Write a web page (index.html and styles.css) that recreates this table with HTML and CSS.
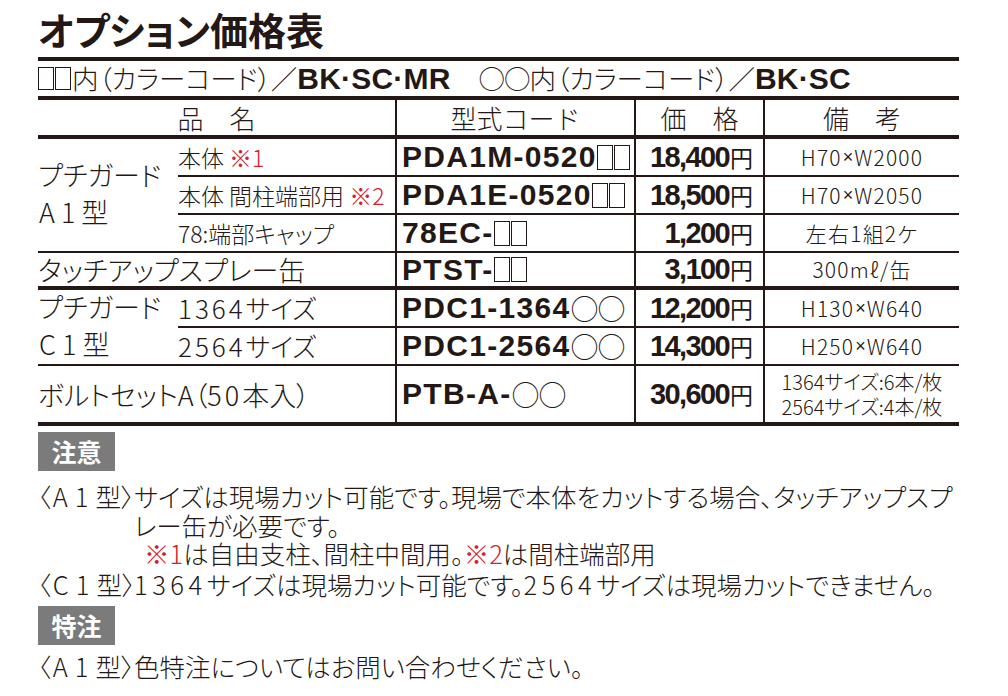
FILE: index.html
```html
<!DOCTYPE html>
<html lang="ja">
<head>
<meta charset="utf-8">
<title>オプション価格表</title>
<link rel="stylesheet" href="styles.css">
</head>
<body>
<div class="page">
  <h1 class="title">オプション価格表</h1>
  <div class="table">
    <div class="cell colorrow thick"><span class="sq"></span><span class="sq"></span>内（カラーコード）／<b class="en">BK·SC·MR</b><span class="gap"></span><span class="circ">○○</span>内（カラーコード）／<b class="en">BK·SC</b></div>

    <div class="cell hd span2 thick">品　名</div>
    <div class="cell hd vl thick">型式コード</div>
    <div class="cell hd vl thick">価　格</div>
    <div class="cell hd vl thick">備　考</div>

    <div class="cell grp rows3"><span>プチガード<br><span class="al">A1</span>型</span></div>
    <div class="cell sub small">本体&nbsp;<span class="red">※1</span></div>
    <div class="cell code vl">PDA1M-0520<span class="sq"></span><span class="sq"></span></div>
    <div class="cell price vl">18,400<span class="yen">円</span></div>
    <div class="cell rem vl">H70<span class="x">×</span>W2000</div>

    <div class="cell sub small">本体&nbsp;間柱端部用&nbsp;<span class="red">※2</span></div>
    <div class="cell code vl">PDA1E-0520<span class="sq"></span><span class="sq"></span></div>
    <div class="cell price vl">18,500<span class="yen">円</span></div>
    <div class="cell rem vl">H70<span class="x">×</span>W2050</div>

    <div class="cell sub small">78:端部キャップ</div>
    <div class="cell code vl">78EC-<span class="sq"></span><span class="sq"></span></div>
    <div class="cell price vl">1,200<span class="yen">円</span></div>
    <div class="cell rem vl">左右1組2ケ</div>

    <div class="cell span2 thick lbl">タッチアップスプレー缶</div>
    <div class="cell code vl thick">PTST-<span class="sq"></span><span class="sq"></span></div>
    <div class="cell price vl thick">3,100<span class="yen">円</span></div>
    <div class="cell rem vl thick">300mℓ/缶</div>

    <div class="cell grp rows2"><span>プチガード<br><span class="al">C1</span>型</span></div>
    <div class="cell sub"><span class="num">1364</span>サイズ</div>
    <div class="cell code vl">PDC1-1364<span class="circ">○○</span></div>
    <div class="cell price vl">12,200<span class="yen">円</span></div>
    <div class="cell rem vl">H130<span class="x">×</span>W640</div>

    <div class="cell sub"><span class="num">2564</span>サイズ</div>
    <div class="cell code vl">PDC1-2564<span class="circ">○○</span></div>
    <div class="cell price vl">14,300<span class="yen">円</span></div>
    <div class="cell rem vl">H250<span class="x">×</span>W640</div>

    <div class="cell span2 thick lbl">ボルトセットA（<span class="num">50</span>本入）</div>
    <div class="cell code vl thick">PTB-A-<span class="circ">○○</span></div>
    <div class="cell price vl thick">30,600<span class="yen">円</span></div>
    <div class="cell rem vl thick two">1364サイズ:6本/枚<br>2564サイズ:4本/枚</div>
  </div>

  <div class="notes">
    <div class="badge">注意</div>
    <div class="note first">
      <div class="nl">〈<span class="al">A1</span>型〉</div>
      <div class="nt">サイズは現場カット可能です。現場で本体をカットする場合、タッチアップスプ<br>レー缶が必要です。<br><span class="ind"><span class="red">※1</span>は自由支柱、間柱中間用。<span class="red">※2</span>は間柱端部用</span></div>
    </div>
    <div class="note c1">
      <div class="nl">〈<span class="al">C1</span>型〉</div>
      <div class="nt"><span class="num">1364</span>サイズは現場カット可能です。<span class="num">2564</span>サイズは現場カットできません。</div>
    </div>
    <div class="badge b2">特注</div>
    <div class="note last">
      <div class="nl">〈<span class="al">A1</span>型〉</div>
      <div class="nt">色特注についてはお問い合わせください。</div>
    </div>
  </div>
</div>
</body>
</html>
```

FILE: styles.css
```css
* { box-sizing: border-box; margin: 0; padding: 0; }

body {
  background: #ffffff;
  color: #231815;
  font-family: "Noto Sans CJK JP", "Noto Sans", sans-serif;
  font-feature-settings: "palt";
}

.page {
  width: 959px;
  padding-left: 38px;
}

.title {
  height: 57px;
  padding-top: 10px;
  font-size: 38px;
  line-height: 38px;
  font-weight: 700;
  letter-spacing: 0;
}

.table {
  display: grid;
  grid-template-columns: 140px 217px 239px 129px 196px;
  grid-template-rows: 39px 39px 38px 38px 38px 37px 38px 38px 60px;
  border-top: 4px solid #231815;
}

.cell {
  display: flex;
  align-items: center;
  border-bottom: 2px solid #231815;
  font-size: 25px;
  font-weight: 300;
  line-height: 1;
  white-space: nowrap;
}

.cell.thick { border-bottom-width: 4px; }
.cell.vl { border-left: 2px solid #231815; }

.colorrow {
  grid-column: 1 / -1;
  font-size: 26.5px;
}

.en {
  font-family: "Liberation Sans", Arial, sans-serif;
  font-weight: 700;
  font-size: 30px;
  letter-spacing: 0.2px;
}

.gap { display: inline-block; width: 28px; }

.circ {
  font-feature-settings: normal;
  font-weight: 300;
  letter-spacing: -1px;
}

.sq {
  display: inline-block;
  width: 16px;
  height: 23px;
  border: 1.3px solid #231815;
  margin-right: 1px;
}

.hd {
  justify-content: center;
  font-size: 26px;
  font-feature-settings: normal;
}

.span2 { grid-column: span 2; }

.grp {
  line-height: 37px;
  font-size: 27px;
}
.grp > span { display: block; margin-top: -4px; }
.rows3 { grid-row: span 3; }
.rows2 { grid-row: span 2; }

.al { letter-spacing: 6px; margin-left: 1px; }
.num { letter-spacing: 3px; }

.sub { font-size: 26px; }
.small { font-size: 23px; }

.red { color: #d2232a; }

.code {
  padding-left: 5px;
  font-family: "Liberation Sans", Arial, sans-serif;
  font-weight: 700;
  font-size: 30px;
  letter-spacing: 1.3px;
}
.code .circ, .code .sq { font-family: "Noto Sans CJK JP", sans-serif; }
.code .circ { font-size: 28px; letter-spacing: -1px; }
.code .sq { width: 16px; height: 25px; margin-right: 1px; }

.price {
  justify-content: flex-end;
  padding-right: 10px;
  font-family: "Liberation Sans", Arial, sans-serif;
  font-weight: 700;
  font-size: 29px;
  letter-spacing: -1.6px;
}
.yen {
  font-family: "Noto Sans CJK JP", sans-serif;
  font-weight: 400;
  font-size: 23px;
  letter-spacing: 0;
  margin-left: 1px;
}

.rem {
  justify-content: center;
  font-size: 21px;
  font-weight: 300;
  letter-spacing: 1.2px;
}
.rem .x {
  font-family: "Liberation Sans", Arial, sans-serif;
  font-size: 18px;
  letter-spacing: 0;
  margin: 0 1px;
}
.rem.two {
  font-size: 20px;
  line-height: 25px;
  text-align: center;
  letter-spacing: 0;
}

.lbl { font-size: 27px; }

.notes { padding-top: 6px; }

.badge {
  width: 77px;
  height: 39px;
  background: #7b7b7b;
  color: #ffffff;
  font-size: 25px;
  font-weight: 700;
  line-height: 39px;
  text-align: center;
}

.note {
  display: flex;
  font-size: 25.5px;
  font-weight: 300;
  line-height: 28.5px;
  white-space: nowrap;
}
.note .al { letter-spacing: 7px; margin-left: 2px; }
.note .num { letter-spacing: 4.5px; }
.note.first { margin-top: 11px; }
.note.c1 { margin-top: 2px; }
.badge.b2 { margin-top: 8px; }
.note.last { margin-top: 7px; }

.nl { width: 96px; flex: none; }
.nt { flex: 1; }
.ind { display: inline-block; padding-left: 10px; }
```
